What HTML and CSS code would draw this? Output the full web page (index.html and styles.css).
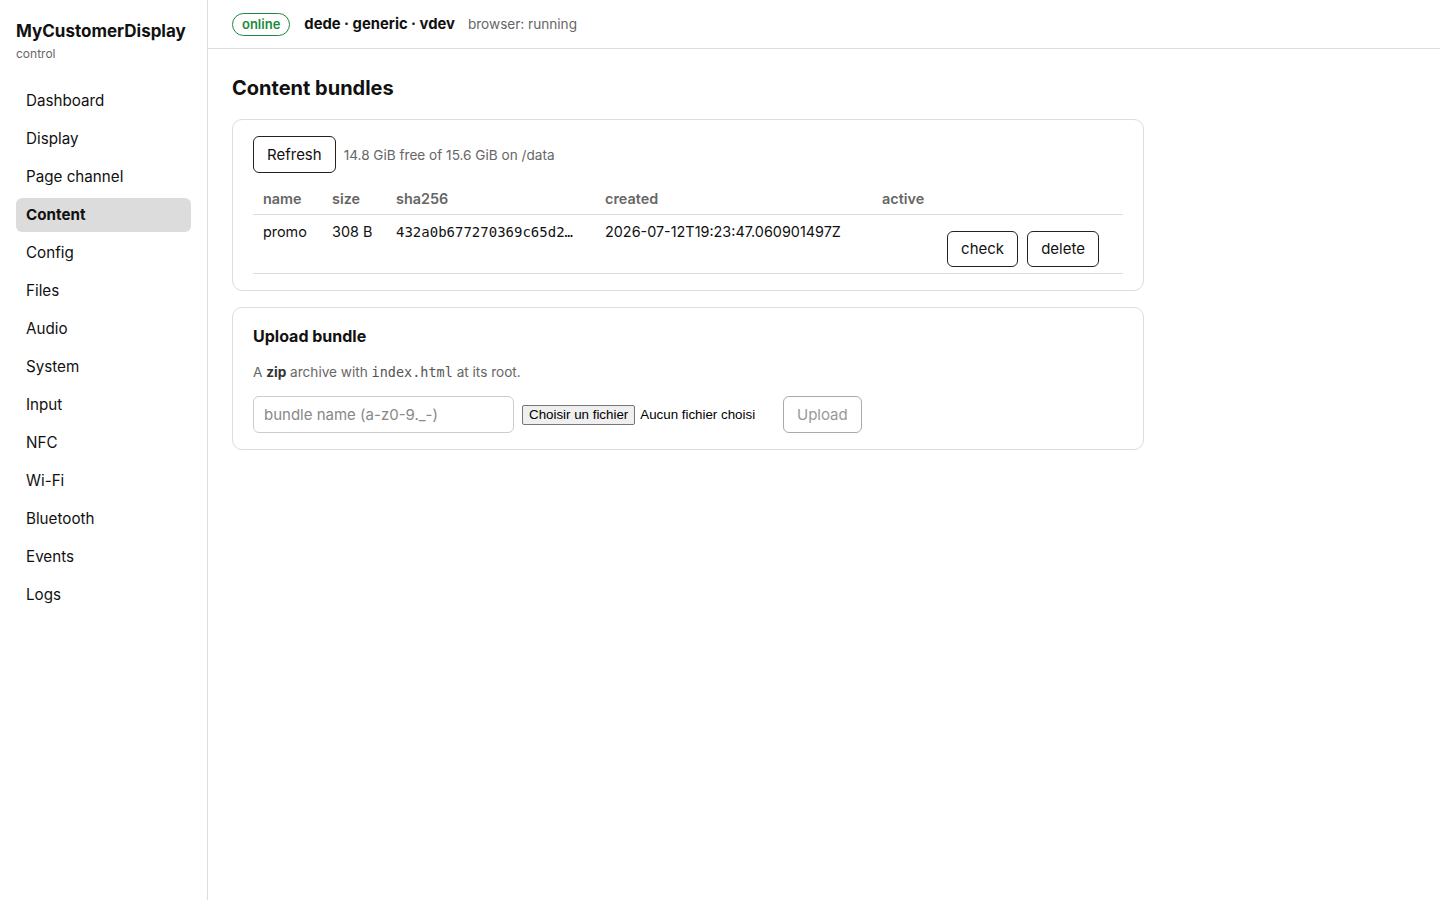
FILE: index.html
```html
<!DOCTYPE html>
<html lang="en">
<head>
    <meta charset="UTF-8">
    <meta name="viewport" content="width=device-width, initial-scale=1.0">
    <title>MyCustomerDisplay</title>
    <link rel="stylesheet" href="styles.css">
</head>
<body>
    <!-- Sidebar -->
    <aside class="sidebar">
        <div class="brand">
            <div class="brand-name">MyCustomerDisplay</div>
            <div class="brand-sub">control</div>
        </div>
        <nav class="nav">
            <a href="#">Dashboard</a>
            <a href="#">Display</a>
            <a href="#">Page channel</a>
            <a href="#" class="active">Content</a>
            <a href="#">Config</a>
            <a href="#">Files</a>
            <a href="#">Audio</a>
            <a href="#">System</a>
            <a href="#">Input</a>
            <a href="#">NFC</a>
            <a href="#">Wi-Fi</a>
            <a href="#">Bluetooth</a>
            <a href="#">Events</a>
            <a href="#">Logs</a>
        </nav>
    </aside>

    <div class="main">
        <!-- Top bar -->
        <header class="topbar">
            <span class="badge">online</span>
            <span class="device">dede · generic · vdev</span>
            <span class="muted">browser: running</span>
        </header>

        <section class="content">
            <h2>Content bundles</h2>

            <div class="card">
                <div class="toolbar">
                    <button class="btn">Refresh</button>
                    <span class="muted small">14.8 GiB free of 15.6 GiB on /data</span>
                </div>
                <table class="bundles">
                    <thead>
                        <tr>
                            <th class="c-name">name</th>
                            <th class="c-size">size</th>
                            <th class="c-sha">sha256</th>
                            <th class="c-created">created</th>
                            <th class="c-active">active</th>
                            <th></th>
                        </tr>
                    </thead>
                    <tbody>
                        <tr>
                            <td>promo</td>
                            <td>308 B</td>
                            <td class="mono">432a0b677270369c65d2…</td>
                            <td>2026-07-12T19:23:47.060901497Z</td>
                            <td></td>
                            <td class="actions">
                                <button class="btn">check</button>
                                <button class="btn">delete</button>
                            </td>
                        </tr>
                    </tbody>
                </table>
            </div>

            <div class="card">
                <h3>Upload bundle</h3>
                <p class="muted small">A <b>zip</b> archive with <code>index.html</code> at its root.</p>
                <div class="upload-row">
                    <input type="text" class="field" placeholder="bundle name (a-z0-9._-)">
                    <label class="file">
                        <input type="file" hidden>
                        <span class="file-btn">Choisir un fichier</span>
                        <span class="file-name">Aucun fichier choisi</span>
                    </label>
                    <button class="btn" disabled>Upload</button>
                </div>
            </div>
        </section>
    </div>
</body>
</html>
```

FILE: styles.css
```css
/* General body styling */
body {
    font-family: 'Inter', 'Noto Sans', sans-serif;
    margin: 0;
    padding: 0;
    background: #ffffff;
    color: #111;
    display: flex;
    min-height: 100vh;
}

.muted {
    color: #666;
}

.small {
    font-size: 13.6px;
}

/* Sidebar */
.sidebar {
    width: 175px;
    flex-shrink: 0;
    padding: 0 16px;
    border-right: 1px solid #ddd;
}

.brand {
    padding: 21px 0 22px;
}

.brand-name {
    font-size: 17px;
    font-weight: 700;
    line-height: 20px;
}

.brand-sub {
    font-size: 12px;
    color: #666;
    margin-top: 5px;
    line-height: 16px;
}

.nav {
    display: flex;
    flex-direction: column;
    gap: 4px;
}

.nav a {
    display: block;
    padding: 6px 10px;
    font-size: 15.2px;
    line-height: 22px;
    color: #111;
    text-decoration: none;
    border-radius: 6px;
}

.nav a.active {
    background: #dcdcdc;
    font-weight: 700;
}

/* Main area */
.main {
    flex: 1;
}

.topbar {
    height: 49px;
    box-sizing: border-box;
    border-bottom: 1px solid #ddd;
    display: flex;
    align-items: center;
    gap: 13px;
    padding: 0 24px;
}

.badge {
    font-size: 13px;
    font-weight: 600;
    color: #1a8a3a;
    border: 1px solid #1a8a3a;
    border-radius: 12px;
    padding: 2px 9px;
    line-height: 17px;
}

.device {
    font-size: 14.8px;
    font-weight: 700;
    margin-left: 1px;
}

.topbar .muted {
    font-size: 13.6px;
}

.content {
    padding: 26px 24px;
    max-width: 912px;
}

.content h2 {
    font-size: 20px;
    margin: 0 0 18px;
    line-height: 26px;
}

/* Cards */
.card {
    border: 1px solid #ddd;
    border-radius: 10px;
    padding: 16px 20px;
    margin-bottom: 16px;
}

.card h3 {
    font-size: 16px;
    margin: 1px 0 15px;
    line-height: 22px;
}

.card p {
    margin: 0 0 14px;
    line-height: 20px;
}

.card code {
    font-family: 'DejaVu Sans Mono', monospace;
    font-size: 13.5px;
    font-weight: 300;
    color: #555;
}

.card b {
    color: #333;
}

/* Buttons */
.btn {
    font-family: 'Inter', sans-serif;
    font-size: 15px;
    color: #111;
    background: #fff;
    border: 1px solid #222;
    border-radius: 6px;
    padding: 8px 13px;
    line-height: 19px;
    cursor: pointer;
}

.btn:disabled {
    color: #999;
    border-color: #aaa;
    cursor: default;
}

.toolbar {
    display: flex;
    align-items: center;
    gap: 8px;
}

/* Table */
.bundles {
    width: 100%;
    border-collapse: collapse;
    margin-top: 8px;
    font-size: 14.4px;
}

.bundles th {
    text-align: left;
    color: #666;
    font-weight: 600;
    padding: 8px 10px 5px;
    border-bottom: 1px solid #ddd;
    line-height: 20px;
}

.bundles td {
    padding: 7px 10px 6px;
    vertical-align: top;
    border-bottom: 1px solid #ddd;
    line-height: 20px;
}

.c-name { width: 49px; }
.c-size { width: 44px; }
.c-sha { width: 189px; }
.c-created { width: 257px; }
.c-active { width: 48px; }

.mono {
    font-family: 'DejaVu Sans Mono', monospace;
    font-size: 14px;
}

.bundles td.actions {
    padding: 16px 24px 6px 0;
    text-align: right;
    white-space: nowrap;
}

.actions .btn {
    margin-left: 5px;
    line-height: 18px;
}

/* Upload form */
.upload-row {
    display: flex;
    align-items: center;
    gap: 8px;
}

.field {
    width: 261px;
    box-sizing: border-box;
    height: 37px;
    padding: 8px 10px;
    font-family: 'Inter', sans-serif;
    font-size: 15px;
    border: 1px solid #ccc;
    border-radius: 6px;
    outline: none;
}

.field::placeholder {
    color: #888;
}

/* File picker */
.file {
    width: 253px;
    display: flex;
    align-items: center;
    gap: 5px;
    font-family: 'Liberation Sans', Arial, sans-serif;
    font-size: 13.333px;
    color: #000;
    cursor: pointer;
}

.file-btn {
    background: #efefef;
    border: 1px solid #767676;
    border-radius: 2px;
    padding: 1px 6px;
    line-height: 16px;
}

.upload-row .btn {
    height: 37px;
}
```
